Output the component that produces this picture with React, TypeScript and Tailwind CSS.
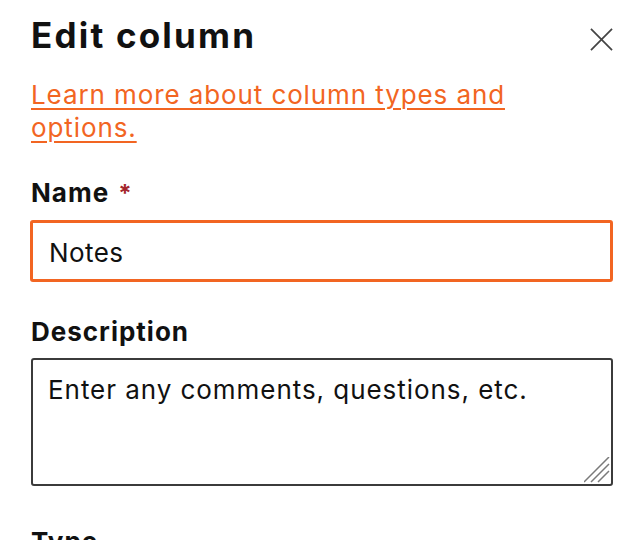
import React from 'react';

const Label = ({ children, required }: { children: React.ReactNode; required?: boolean }) => (
  <div className="text-[26px] leading-[32px] font-bold tracking-[1px] text-[#111]">
    {children}
    {required && <span className="ml-[9px] text-[24px] text-[#a4262c]">*</span>}
  </div>
);

const EditColumn = () => {
  return (
    <div className="w-[642px] h-[540px] overflow-hidden bg-white font-['Inter',sans-serif] text-[#111]">
      <div className="pl-[31px] pr-[29px] pt-[15px]">
        <div className="flex items-start justify-between">
          <h1 className="text-[35px] leading-[40px] font-bold tracking-[2.2px]">Edit column</h1>
          <button className="mt-[13px] w-[23px] h-[23px] text-[#444]">
            <svg viewBox="0 0 24 24" className="w-[23px] h-[23px]" fill="none" stroke="currentColor" strokeWidth="1.8">
              <path d="M1 1 L23 23 M23 1 L1 23" />
            </svg>
          </button>
        </div>

        <a href="#" className="mt-[23px] block w-[490px] text-[26px] leading-[33px] tracking-[0.9px] text-[#f26522] underline underline-offset-[4px] decoration-[2px]">
          Learn more about column types and options.
        </a>

        <div className="mt-[33px]">
          <Label required>Name</Label>
          <div className="mt-[10px] -ml-[1px] h-[62px] rounded-[3px] border-[3px] border-[#f26522] pl-[16px] pt-[14px] text-[26px] leading-[32px] tracking-[0.4px]">
            Notes
          </div>
        </div>

        <div className="mt-[34px]">
          <Label>Description</Label>
          <div className="relative mt-[10px] h-[128px] rounded-[3px] border-[2px] border-[#3b3b3b] pl-[15px] pt-[14px] text-[26px] leading-[32px] tracking-[0.95px]">
            Enter any comments, questions, etc.
            <svg viewBox="0 0 26 26" className="absolute right-[1px] bottom-[1px] w-[26px] h-[26px]" fill="none" stroke="#7a7a7a" strokeWidth="1.5">
              <path d="M0 25 L25 0 M7 25 L25 7 M14 25 L25 14" />
            </svg>
          </div>
        </div>

        <div className="mt-[40px]">
          <Label>Type</Label>
        </div>
      </div>
    </div>
  );
};

export default EditColumn;
